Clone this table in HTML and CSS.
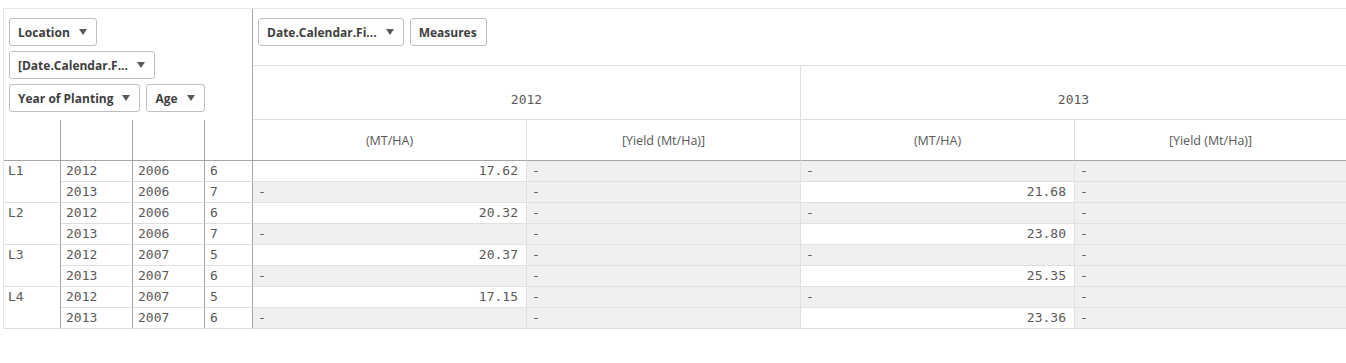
FILE: index.html
```html
<!DOCTYPE html>
<html>
<head>
<meta charset="utf-8">
<link rel="stylesheet" href="styles.css">
</head>
<body>
<div class="pivot">
  <div class="panel-left">
    <div class="btn-row"><span class="btn">Location<i class="caret"></i></span></div>
    <div class="btn-row"><span class="btn">[Date.Calendar.F...<i class="caret"></i></span></div>
    <div class="btn-row"><span class="btn">Year of Planting<i class="caret"></i></span><span class="btn">Age<i class="caret"></i></span></div>
  </div>
  <div class="panel-right">
    <span class="btn">Date.Calendar.Fi...<i class="caret"></i></span><span class="btn">Measures</span>
  </div>
  <div class="year y2012">2012</div>
  <div class="year y2013">2013</div>
  <div class="dimhead c1"></div>
  <div class="dimhead c2"></div>
  <div class="dimhead c3"></div>
  <div class="dimhead c4"></div>
  <div class="meas c5">(MT/HA)</div>
  <div class="meas c6">[Yield (Mt/Ha)]</div>
  <div class="meas c7">(MT/HA)</div>
  <div class="meas c8 last">[Yield (Mt/Ha)]</div>

  <div class="dim loc">L1</div>
  <div class="dim">2012</div><div class="dim">2006</div><div class="dim edge">6</div>
  <div class="val">17.62</div><div class="nul">-</div><div class="nul">-</div><div class="nul last">-</div>
  <div class="dim">2013</div><div class="dim">2006</div><div class="dim edge">7</div>
  <div class="nul">-</div><div class="nul">-</div><div class="val">21.68</div><div class="nul last">-</div>

  <div class="dim loc">L2</div>
  <div class="dim">2012</div><div class="dim">2006</div><div class="dim edge">6</div>
  <div class="val">20.32</div><div class="nul">-</div><div class="nul">-</div><div class="nul last">-</div>
  <div class="dim">2013</div><div class="dim">2006</div><div class="dim edge">7</div>
  <div class="nul">-</div><div class="nul">-</div><div class="val">23.80</div><div class="nul last">-</div>

  <div class="dim loc">L3</div>
  <div class="dim">2012</div><div class="dim">2007</div><div class="dim edge">5</div>
  <div class="val">20.37</div><div class="nul">-</div><div class="nul">-</div><div class="nul last">-</div>
  <div class="dim">2013</div><div class="dim">2007</div><div class="dim edge">6</div>
  <div class="nul">-</div><div class="nul">-</div><div class="val">25.35</div><div class="nul last">-</div>

  <div class="dim loc">L4</div>
  <div class="dim">2012</div><div class="dim">2007</div><div class="dim edge">5</div>
  <div class="val">17.15</div><div class="nul">-</div><div class="nul">-</div><div class="nul last">-</div>
  <div class="dim">2013</div><div class="dim">2007</div><div class="dim edge">6</div>
  <div class="nul">-</div><div class="nul">-</div><div class="val">23.36</div><div class="nul last">-</div>
</div>
</body>
</html>
```

FILE: styles.css
```css
html, body {
  margin: 0;
  padding: 0;
  background: #ffffff;
}

.pivot {
  margin: 8px 0 0 3px;
  width: 1343px;
  box-sizing: border-box;
  border-top: 1px solid #e6e6e6;
  border-left: 1px solid #e6e6e6;
  display: grid;
  grid-template-columns: 57px 72px 72px 48px 274px 274px 274px 1fr;
  grid-template-rows: 57px 54px 41px repeat(8, 21px);
  color: #595959;
  font-family: "DejaVu Sans Mono", "Liberation Mono", monospace;
  font-size: 13px;
}

.pivot > div {
  box-sizing: border-box;
}

.panel-left {
  grid-column: 1 / 5;
  grid-row: 1 / 3;
  border-right: 1px solid #a6a6a6;
  padding: 9px 0 0 5px;
  display: flex;
  flex-direction: column;
  gap: 5px;
}

.btn-row {
  display: flex;
  gap: 6px;
}

.panel-right {
  grid-column: 5 / 9;
  grid-row: 1;
  border-bottom: 1px solid #e0e0e0;
  padding: 9px 0 0 5px;
  display: flex;
  align-items: flex-start;
  gap: 6px;
}

.btn {
  height: 28px;
  box-sizing: border-box;
  display: inline-flex;
  align-items: center;
  gap: 9px;
  padding: 0 9px 0 8px;
  border: 1px solid #bfbfbf;
  border-radius: 3px;
  background: #ffffff;
  color: #404040;
  font-family: "Open Sans", "Noto Sans", sans-serif;
  font-weight: 700;
  font-size: 12px;
  white-space: nowrap;
}

.caret {
  display: inline-block;
  width: 0;
  height: 0;
  border-left: 4px solid transparent;
  border-right: 4px solid transparent;
  border-top: 6px solid #595959;
}

.year {
  grid-row: 2;
  border-bottom: 1px solid #e0e0e0;
  display: flex;
  justify-content: center;
  align-items: center;
  padding-top: 13px;
}

.y2012 {
  grid-column: 5 / 7;
  border-right: 1px solid #e0e0e0;
}

.y2013 {
  grid-column: 7 / 9;
}

.dimhead {
  grid-row: 3;
  border-right: 1px solid #a6a6a6;
  border-bottom: 1px solid #a6a6a6;
}

.c1 { grid-column: 1; }
.c2 { grid-column: 2; }
.c3 { grid-column: 3; }
.c4 { grid-column: 4; }
.c5 { grid-column: 5; }
.c6 { grid-column: 6; }
.c7 { grid-column: 7; }
.c8 { grid-column: 8; }

.meas {
  grid-row: 3;
  border-right: 1px solid #e0e0e0;
  border-bottom: 1px solid #a6a6a6;
  display: flex;
  justify-content: center;
  align-items: center;
  font-family: "Open Sans", "Noto Sans", sans-serif;
  font-size: 12.5px;
}

.pivot > .last {
  border-right: none;
}

.dim,
.val,
.nul {
  line-height: 20px;
  white-space: nowrap;
  border-bottom: 1px solid #e0e0e0;
}

.dim {
  border-right: 1px solid #a6a6a6;
  padding-left: 5px;
  background: #ffffff;
}

.loc {
  grid-column: 1;
  grid-row: span 2;
  padding-left: 4px;
}

.val {
  text-align: right;
  padding-right: 8px;
  background: #ffffff;
  border-right: 1px solid #e0e0e0;
}

.nul {
  padding-left: 5px;
  background: #f0f0f0;
  border-right: 1px solid #e0e0e0;
}
```
